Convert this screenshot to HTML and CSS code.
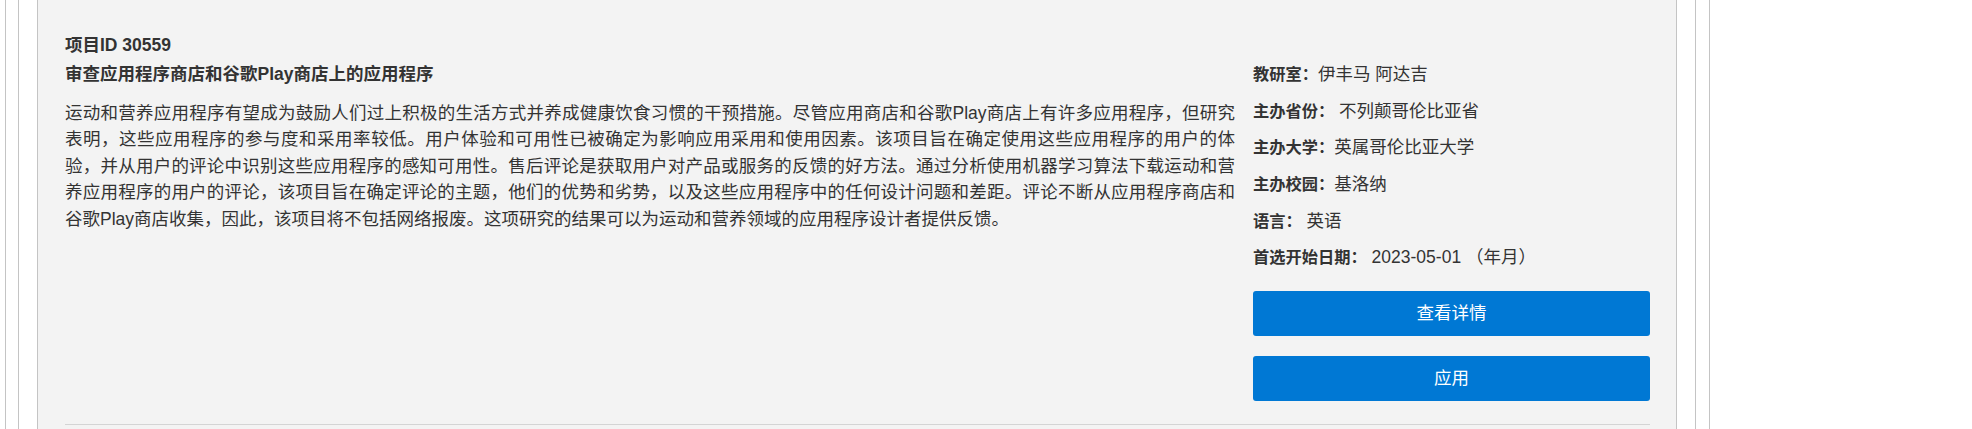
FILE: index.html
```html
<!DOCTYPE html>
<html lang="zh-CN">
<head>
<meta charset="utf-8">
<title>项目ID 30559</title>
<link rel="stylesheet" href="styles.css">
</head>
<body>
<div class="frame">
  <div class="frame-inner">
    <div class="panel">
      <div class="item">
        <div class="item-id">项目ID 30559</div>
        <div class="item-row">
          <div class="item-main">
            <div class="item-title">审查应用程序商店和谷歌Play商店上的应用程序</div>
            <p class="item-desc">运动和营养应用程序有望成为鼓励人们过上积极的生活方式并养成健康饮食习惯的干预措施。尽管应用商店和谷歌Play商店上有许多应用程序，但研究表明，这些应用程序的参与度和采用率较低。用户体验和可用性已被确定为影响应用采用和使用因素。该项目旨在确定使用这些应用程序的用户的体验，并从用户的评论中识别这些应用程序的感知可用性。售后评论是获取用户对产品或服务的反馈的好方法。通过分析使用机器学习算法下载运动和营养应用程序的用户的评论，该项目旨在确定评论的主题，他们的优势和劣势，以及这些应用程序中的任何设计问题和差距。评论不断从应用程序商店和谷歌Play商店收集，因此，该项目将不包括网络报废。这项研究的结果可以为运动和营养领域的应用程序设计者提供反馈。</p>
          </div>
          <div class="item-side">
            <div class="meta"><span class="meta-label">教研室：</span><span class="meta-value">伊丰马 阿达吉</span></div>
            <div class="meta"><span class="meta-label">主办省份：</span><span class="meta-value"> 不列颠哥伦比亚省</span></div>
            <div class="meta"><span class="meta-label">主办大学：</span><span class="meta-value">英属哥伦比亚大学</span></div>
            <div class="meta"><span class="meta-label">主办校园：</span><span class="meta-value">基洛纳</span></div>
            <div class="meta"><span class="meta-label">语言：</span><span class="meta-value"> 英语</span></div>
            <div class="meta"><span class="meta-label">首选开始日期：</span><span class="meta-value"> 2023-05-01 （年月）</span></div>
            <div class="actions">
              <a class="btn" href="#">查看详情</a>
              <a class="btn" href="#">应用</a>
            </div>
          </div>
        </div>
      </div>
    </div>
  </div>
</div>
</body>
</html>
```

FILE: styles.css
```css
html, body {
  margin: 0;
  padding: 0;
  height: 100%;
  overflow: hidden;
  background: #ffffff;
}

body {
  font-family: "Liberation Sans", "Noto Sans CJK SC", sans-serif;
  color: #333333;
  font-size: 17.5px;
}

.frame {
  margin-left: 5px;
  width: 1705px;
  height: 429px;
  box-sizing: border-box;
  border-left: 1px solid #c4c4c4;
  border-right: 1px solid #c4c4c4;
  padding: 0 13px 0 12px;
}

.frame-inner {
  height: 100%;
  box-sizing: border-box;
  border-left: 1px solid #c4c4c4;
  border-right: 1px solid #c4c4c4;
  padding: 0 18px;
}

.panel {
  height: 100%;
  box-sizing: border-box;
  background: #f3f3f3;
  border-left: 1px solid #c4c4c4;
  border-right: 1px solid #c4c4c4;
  padding: 32px 26px 0 27px;
}

.item {
  padding-bottom: 23px;
  border-bottom: 1px solid #d4d4d4;
}

.item-id {
  font-weight: bold;
  line-height: 26px;
}

.item-row {
  display: flex;
  gap: 18px;
  margin-top: 3px;
}

.item-main {
  flex: none;
  width: 1170px;
}

.item-title {
  font-weight: bold;
  line-height: 26px;
}

.item-desc {
  margin: 13px 0 0;
  line-height: 26.4px;
  text-align: justify;
}

.item-side {
  flex: none;
  width: 397px;
}

.meta {
  height: 26.25px;
  line-height: 26.25px;
  margin-bottom: 10.45px;
  white-space: pre;
}

.meta-label {
  font-weight: bold;
  font-size: 16.25px;
}

.meta-value {
  font-size: 17.5px;
}

.actions {
  display: flex;
  flex-direction: column;
  gap: 20px;
  margin-top: 20.25px;
}

.btn {
  display: block;
  height: 45px;
  line-height: 45px;
  background: #0078d4;
  color: #ffffff;
  text-align: center;
  text-decoration: none;
  border-radius: 3px;
  font-size: 17.5px;
}
```
